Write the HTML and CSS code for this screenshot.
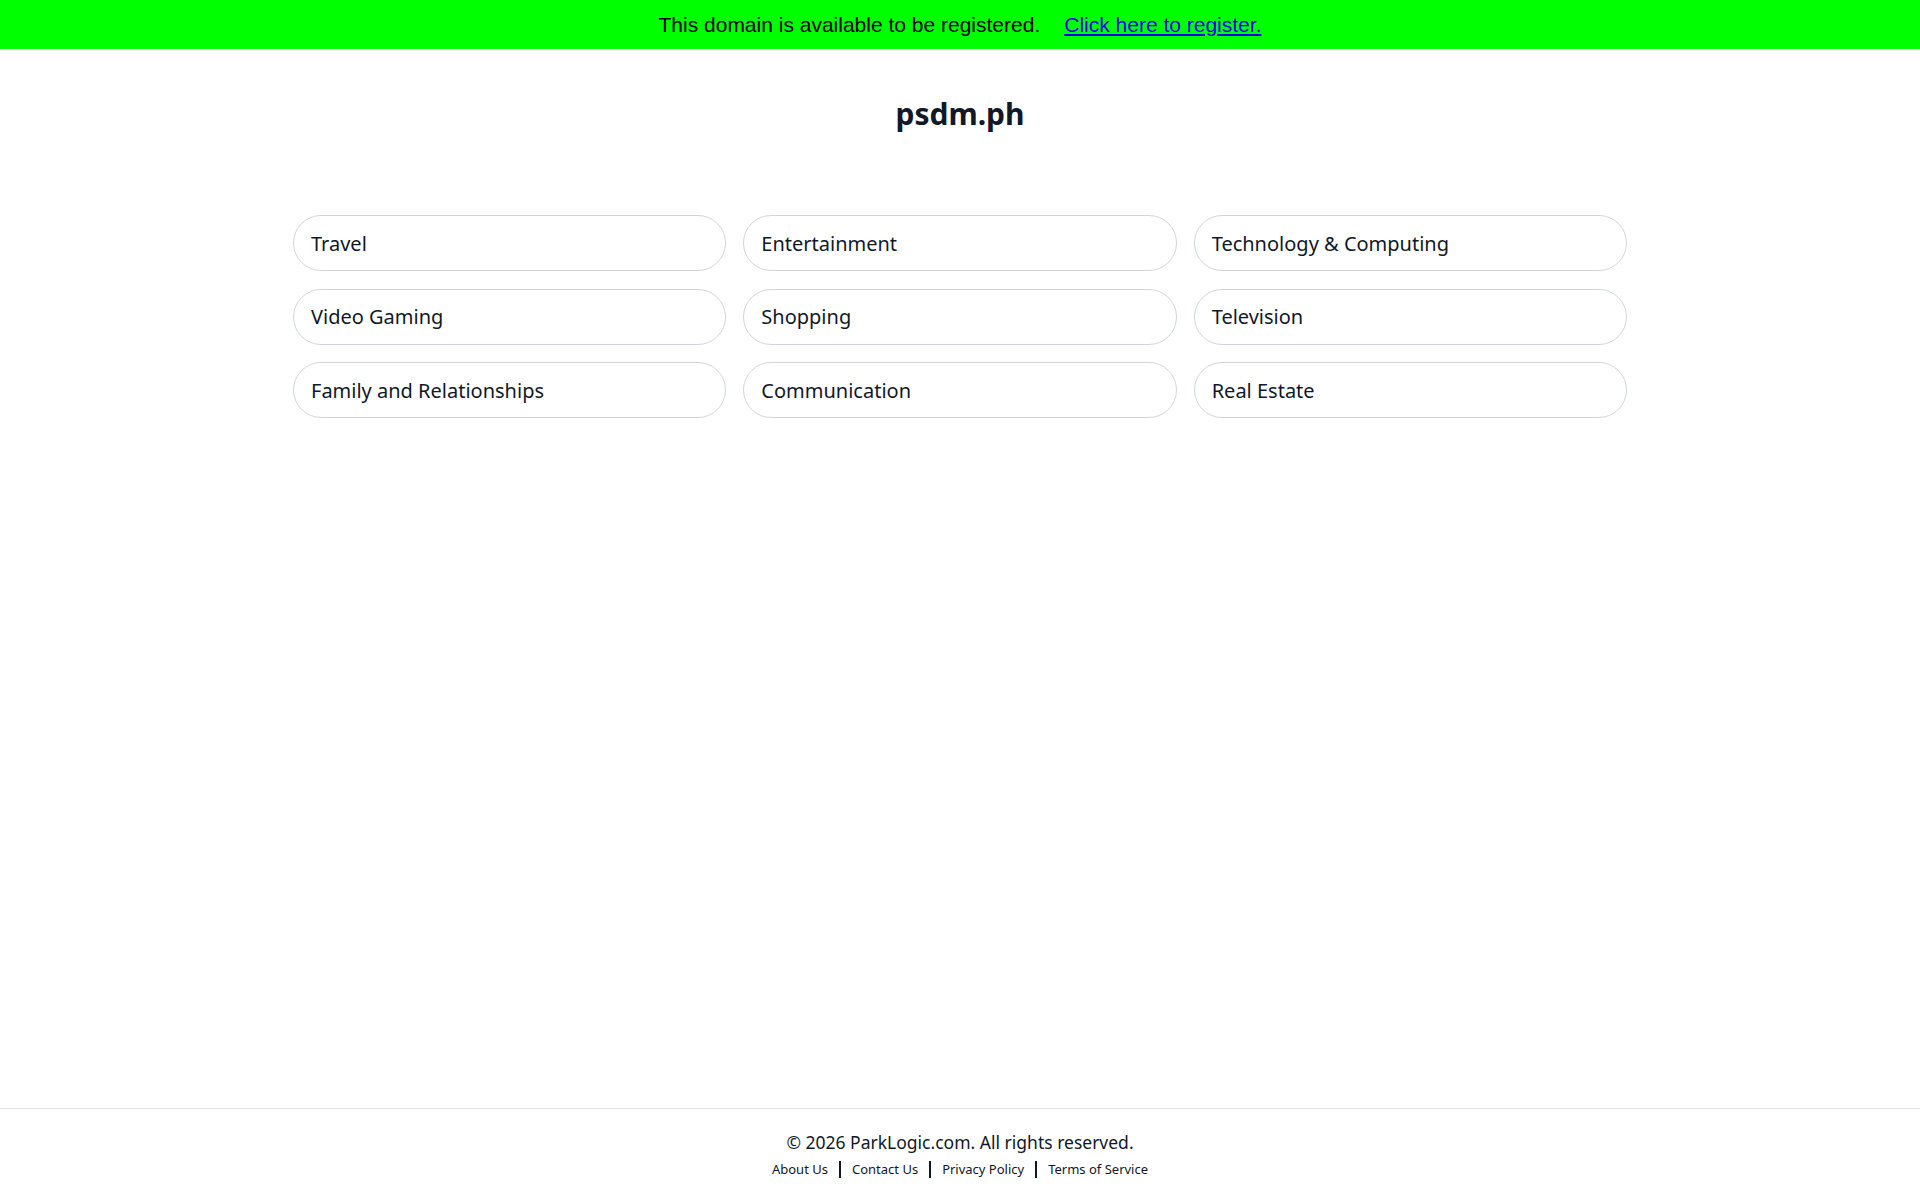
FILE: index.html
```html
<!DOCTYPE html>
<html lang="en">
<head>
    <meta charset="UTF-8">
    <meta name="viewport" content="width=device-width, initial-scale=1.0">
    <title>psdm.ph</title>
    <link rel="stylesheet" href="styles.css">
</head>
<body>
    <div class="register-bar">
        <span>This domain is available to be registered.</span>
        <a href="#">Click here to register.</a>
    </div>

    <main class="content">
        <h1 class="domain-title">psdm.ph</h1>

        <div class="topic-grid">
            <a href="#" class="topic-link">Travel</a>
            <a href="#" class="topic-link">Entertainment</a>
            <a href="#" class="topic-link">Technology &amp; Computing</a>
            <a href="#" class="topic-link">Video Gaming</a>
            <a href="#" class="topic-link">Shopping</a>
            <a href="#" class="topic-link">Television</a>
            <a href="#" class="topic-link">Family and Relationships</a>
            <a href="#" class="topic-link">Communication</a>
            <a href="#" class="topic-link">Real Estate</a>
        </div>
    </main>

    <footer class="footer">
        <p class="copyright">&copy; 2026 ParkLogic.com. All rights reserved.</p>
        <div class="footer-links">
            <a href="#">About Us</a>
            <span class="divider"></span>
            <a href="#">Contact Us</a>
            <span class="divider"></span>
            <a href="#">Privacy Policy</a>
            <span class="divider"></span>
            <a href="#">Terms of Service</a>
        </div>
    </footer>
</body>
</html>
```

FILE: styles.css
```css
body {
    margin: 0;
    font-family: "Segoe UI", "Noto Sans", sans-serif;
    background-color: white;
    color: #111827;
    display: flex;
    flex-direction: column;
    min-height: 100vh;
}

.register-bar {
    background-color: #00ff00;
    height: 49px;
    display: flex;
    align-items: center;
    justify-content: center;
    gap: 24px;
    font-family: "Liberation Sans", Arial, sans-serif;
    font-size: 21px;
    color: black;
}

.register-bar a {
    color: #0000ee;
    text-decoration: underline;
}

.content {
    flex: 1;
    padding: 0 293px;
}

.domain-title {
    text-align: center;
    font-size: 30px;
    font-weight: bold;
    margin: 45px 0 81px;
    line-height: 40px;
}

.topic-grid {
    display: grid;
    grid-template-columns: repeat(3, 1fr);
    gap: 17.5px 17px;
}

.topic-link {
    display: flex;
    align-items: center;
    height: 56px;
    box-sizing: border-box;
    padding: 0 17px;
    border: 1.5px solid #d1d5db;
    border-radius: 28px;
    color: #111827;
    text-decoration: none;
    font-size: 20px;
}

.footer {
    border-top: 1px solid #e5e7eb;
    text-align: center;
    padding: 21px 0 22px;
}

.copyright {
    margin: 0;
    font-size: 17.5px;
    line-height: 24px;
}

.footer-links {
    display: flex;
    justify-content: center;
    align-items: center;
    margin-top: 6px;
    font-size: 13px;
    line-height: 18px;
}

.footer-links a {
    color: #111827;
    text-decoration: none;
}

.divider {
    width: 2px;
    height: 17px;
    background-color: #111827;
    margin: 0 11px;
}
```
